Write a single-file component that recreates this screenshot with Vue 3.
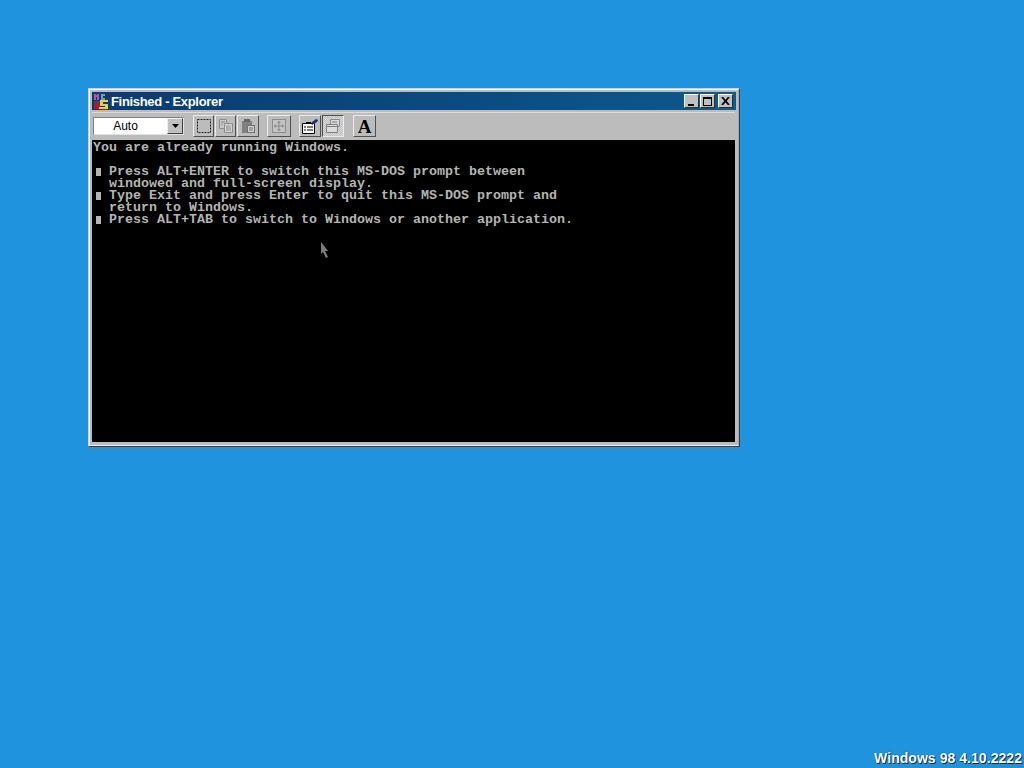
<script setup>
const lines = [
  { b: false, t: 'You are already running Windows.' },
  { b: false, t: ' ' },
  { b: true, t: 'Press ALT+ENTER to switch this MS-DOS prompt between' },
  { b: false, t: '  windowed and full-screen display.' },
  { b: true, t: 'Type Exit and press Enter to quit this MS-DOS prompt and' },
  { b: false, t: '  return to Windows.' },
  { b: true, t: 'Press ALT+TAB to switch to Windows or another application.' }
]
</script>

<template>
  <div class="desktop">
    <div class="window">
      <div class="frame">
        <div class="titlebar">
          <svg class="appicon" width="17" height="17" viewBox="0 0 17 17">
            <rect x="1" y="1" width="2" height="6" fill="#b050b0" />
            <rect x="3" y="2" width="1" height="2" fill="#b050b0" />
            <rect x="4" y="1" width="2" height="6" fill="#b050b0" />
            <rect x="8" y="1" width="4" height="2" fill="#50b0b0" />
            <rect x="8" y="3" width="2" height="2" fill="#50b0b0" />
            <rect x="8" y="5" width="4" height="2" fill="#50b0b0" />
            <path d="M1 8h6v8H1z" fill="#a02030" />
            <path d="M7 7h8v2H10v2h5v5H6v-2h6v-1H7z" fill="#e8d040" />
          </svg>
          <span class="title">Finished - Explorer</span>
          <div class="controls">
            <button class="cbtn"><svg width="9" height="9" viewBox="0 0 9 9"><rect x="1" y="7" width="6" height="2" fill="#000" /></svg></button>
            <button class="cbtn gapright"><svg width="9" height="9" viewBox="0 0 9 9"><path d="M0 0h9v9H0z M1 2v6h7V2z" fill="#000" fill-rule="evenodd" /></svg></button>
            <button class="cbtn"><svg width="9" height="8" viewBox="0 0 9 8"><path d="M1 0l7 8M8 0L1 8" stroke="#000" stroke-width="1.8" fill="none" /></svg></button>
          </div>
        </div>

        <div class="toolbar">
          <div class="combo">
            <span class="combotext">Auto</span>
            <span class="combobtn"><svg width="7" height="4" viewBox="0 0 7 4"><path d="M0 0h7L3.5 4z" fill="#000" /></svg></span>
          </div>
          <div class="group g1">
            <button class="tbtn b21"><svg width="16" height="16" viewBox="0 0 16 16"><rect x="1.5" y="1.5" width="13" height="13" fill="none" stroke="#222" stroke-dasharray="2 1" /></svg></button>
            <button class="tbtn b21"><svg width="16" height="16" viewBox="0 0 16 16"><path d="M1.5 1.5h7v9h-7z" fill="#c8c8c8" stroke="#8c8c8c" /><path d="M6.5 5.5h8v9h-8z" fill="#d4d4d4" stroke="#8c8c8c" /><path d="M8 8h5M8 10h5M8 12h5M3 4h4M3 6h2" stroke="#8c8c8c" /></svg></button>
            <button class="tbtn b22"><svg width="16" height="16" viewBox="0 0 16 16"><rect x="2" y="3" width="10" height="12" fill="#808080" /><rect x="4" y="1" width="6" height="3" fill="#686868" /><rect x="7.5" y="7.5" width="7" height="7" fill="#d0d0d0" stroke="#707070" /><path d="M9 10h4M9 12h4" stroke="#707070" /></svg></button>
          </div>
          <div class="group g2">
            <button class="tbtn b24"><svg width="16" height="16" viewBox="0 0 16 16"><rect x="1.5" y="1.5" width="13" height="13" fill="#c4c4c4" stroke="#8c8c8c" /><path d="M8 3v10M3 8h10" stroke="#8c8c8c" /><path d="M8 3L6 5h4zM8 13l-2-2h4zM3 8l2-2v4zM13 8l-2-2v4z" fill="#8c8c8c" /></svg></button>
          </div>
          <div class="group g3">
            <button class="tbtn b22"><svg width="18" height="17" viewBox="0 0 18 17"><path d="M1.5 5.5h12v10h-12z" fill="#fff" stroke="#000" /><path d="M3 9h2M6 9h6M3 12h2M6 12h6" stroke="#000" /><rect x="5" y="4" width="5" height="2" fill="#000" /><path d="M10 5l5-4 2 1-1 2-5 3z" fill="#1a2a70" /></svg></button>
            <button class="tbtn b22 pressed"><svg width="17" height="16" viewBox="0 0 17 16"><path d="M5.5 1.5h9v7h-9z" fill="#d8d8d8" stroke="#8c8c8c" /><path d="M1.5 6.5h11v8h-11z" fill="#dcdcdc" stroke="#808080" /><path d="M1.5 8.5h11M7 4h5" stroke="#808080" /></svg></button>
          </div>
          <div class="group g4">
            <button class="tbtn b23 fontbtn">A</button>
          </div>
        </div>

        <div class="terminal">
          <div v-for="(l, i) in lines" :key="i" class="row"><span v-if="l.b" class="bullet"><i></i></span>{{ l.t }}</div>
          <svg class="cursor" width="10" height="17" viewBox="0 0 10 17">
            <path d="M1 0v12l2-2 3 6 2-1-3-6h3z" fill="#7c7c7c" />
          </svg>
        </div>
      </div>
    </div>
    <div class="version">Windows 98 4.10.2222</div>
  </div>
</template>

<style>
html, body { margin: 0; padding: 0; background: #1f93de; }
</style>

<style scoped>
.desktop {
  width: 1024px;
  height: 768px;
  box-sizing: border-box;
  padding: 88px 0 0 88px;
  background: #1f93de;
  display: flex;
  flex-direction: column;
  overflow: hidden;
}
.window {
  width: 652px;
  height: 359px;
  box-sizing: border-box;
  border: 1px solid;
  border-color: #c8d0d4 #30404c #30404c #c8d0d4;
  background: #bcbcbc;
}
.frame {
  height: 100%;
  box-sizing: border-box;
  border: 1px solid;
  border-color: #f4f8fa #a8a8a8 #f0f0f0 #f4f8fa;
  padding: 2px 3px 3px 2px;
  display: flex;
  flex-direction: column;
}
.titlebar {
  height: 18px;
  margin-right: -1px;
  background: linear-gradient(90deg, #0c3a6e, #0c4a7e 55%, #0d5a8a);
  display: flex;
  align-items: center;
  padding-left: 1px;
  flex: none;
}
.appicon { flex: none; }
.title {
  margin-left: 1px;
  color: #fff;
  font: bold 13px "Liberation Sans", Arial, sans-serif;
  letter-spacing: -0.32px;
  white-space: nowrap;
}
.controls {
  margin-left: auto;
  display: flex;
  gap: 1px;
  padding-right: 3px;
}
.cbtn {
  width: 15px;
  height: 14px;
  padding: 0;
  box-sizing: border-box;
  background: #c0c0c0;
  border: 1px solid;
  border-color: #fff #303030 #303030 #fff;
  display: flex;
  align-items: center;
  justify-content: center;
}
.gapright { margin-right: 2px; }
.toolbar {
  height: 27px;
  margin-top: 2px;
  flex: none;
  display: flex;
  align-items: center;
  border-top: 1px solid #dcdcdc;
  box-sizing: border-box;
  padding-left: 1px;
}
.combo {
  width: 91px;
  height: 18px;
  box-sizing: border-box;
  background: #fff;
  border: 1px solid;
  border-color: #808080 #e0e0e0 #e0e0e0 #808080;
  display: flex;
  align-items: center;
  flex: none;
}
.combotext {
  flex: 1;
  text-align: center;
  font: 12px "Liberation Sans", Arial, sans-serif;
  color: #000;
  padding-right: 10px;
}
.combobtn {
  width: 16px;
  height: 16px;
  box-sizing: border-box;
  background: #c0c0c0;
  border: 1px solid;
  border-color: #f0f0f0 #404040 #404040 #f0f0f0;
  display: flex;
  align-items: center;
  justify-content: center;
}
.group { display: flex; flex: none; gap: 1px; }
.g1 { margin-left: 9px; }
.g2 { margin-left: 8px; }
.g3 { margin-left: 8px; }
.g4 { margin-left: 9px; }
.tbtn {
  height: 22px;
  padding: 0;
  box-sizing: border-box;
  background: #bcbcbc;
  border: 1px solid;
  border-color: #ececec #505050 #505050 #ececec;
  display: flex;
  align-items: center;
  justify-content: center;
}
.b21 { width: 21px; }
.b22 { width: 22px; }
.b23 { width: 23px; }
.b24 { width: 24px; }
.pressed {
  border-color: #505050 #ececec #ececec #505050;
  background: repeating-conic-gradient(#dcdcdc 0 25%, #bcbcbc 0 50%) 0 0 / 2px 2px;
}
.fontbtn {
  font: bold 19px/19px "Liberation Serif", "Times New Roman", serif;
  color: #000;
}
.terminal {
  position: relative;
  flex: 1;
  min-height: 0;
  margin-top: 1px;
  padding: 2px 0 0 1px;
  background: #000;
  overflow: hidden;
}
.row {
  height: 12px;
  white-space: pre;
  color: #b4b4b4;
  font: 700 13.33px/12px "Liberation Mono", "Courier New", monospace;
}
.bullet {
  display: inline-block;
  width: 16px;
  height: 12px;
  vertical-align: top;
  position: relative;
}
.bullet i {
  position: absolute;
  left: 3px;
  top: 2px;
  width: 5px;
  height: 8px;
  background: #b4b4b4;
}
.cursor {
  position: absolute;
  left: 228px;
  top: 102px;
}
.version {
  margin-top: auto;
  margin-left: auto;
  margin-right: 2px;
  margin-bottom: 2px;
  color: #fff;
  font: bold 14px "Liberation Sans", Arial, sans-serif;
  letter-spacing: 0.05px;
  text-shadow: 1px 1px 0 #0b2f4a, 0 0 1px #0b2f4a;
  white-space: nowrap;
}
</style>
